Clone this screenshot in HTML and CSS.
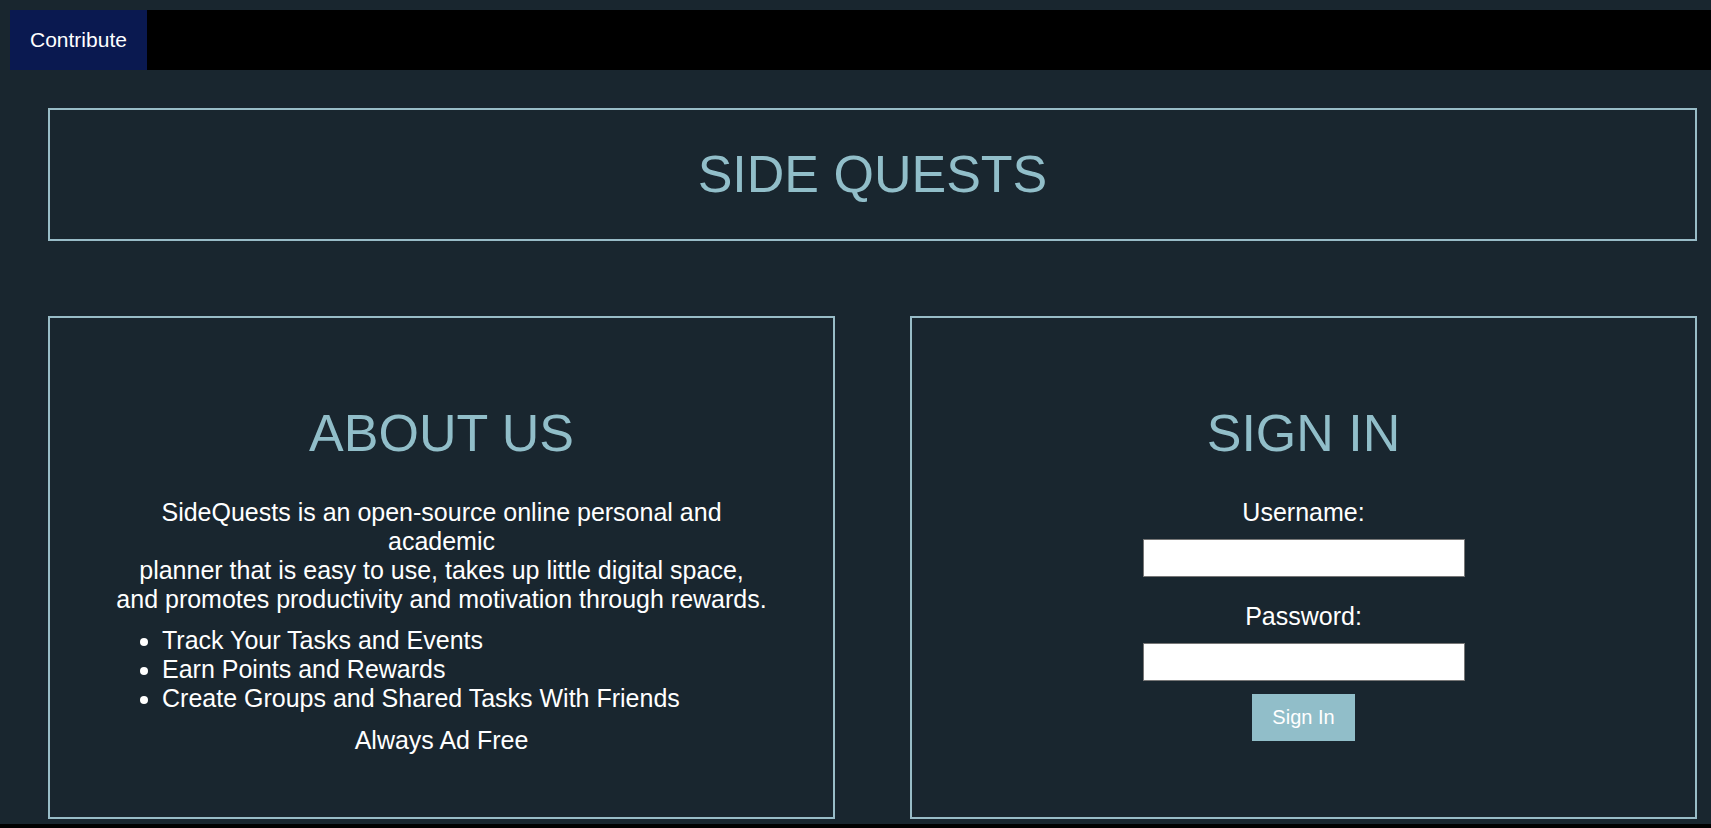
FILE: index.html
```html
<!DOCTYPE html>
<html lang="en">
<head>
<meta charset="utf-8">
<title>Side Quests</title>
<link rel="stylesheet" href="styles.css">
</head>
<body class="page">
<nav class="navbar">
  <a class="navbar-link" href="#contribute">Contribute</a>
</nav>
<main class="content">
  <header class="banner">
    <h1 class="title">SIDE QUESTS</h1>
  </header>
  <div class="panels">
    <section class="panel">
      <h2 class="title">ABOUT US</h2>
      <p class="text">SideQuests is an open-source online personal and academic<br>planner that is easy to use, takes up little digital space,<br>and promotes productivity and motivation through rewards.</p>
      <ul class="features">
        <li>Track Your Tasks and Events</li>
        <li>Earn Points and Rewards</li>
        <li>Create Groups and Shared Tasks With Friends</li>
      </ul>
      <p class="text">Always Ad Free</p>
    </section>
    <section class="panel">
      <h2 class="title">SIGN IN</h2>
      <form class="signin">
        <div class="field">
          <label for="username">Username:</label>
          <input class="field-input" type="text" id="username" name="username">
        </div>
        <div class="field">
          <label for="password">Password:</label>
          <input class="field-input" type="password" id="password" name="password">
        </div>
        <button class="button" type="submit">Sign In</button>
      </form>
    </section>
  </div>
</main>
<footer class="footer"></footer>
</body>
</html>
```

FILE: styles.css
```css
* {
  box-sizing: border-box;
}

.page {
  display: flex;
  flex-direction: column;
  min-height: 100vh;
  margin: 0;
  padding-top: 10px;
  background: #19262f;
  color: #fff;
  font: 25px/29px "Liberation Sans", Arial, sans-serif;
}

.navbar {
  display: flex;
  margin-left: 10px;
  background: #000;
}

.navbar-link {
  padding: 18px 20px;
  background: #0a1950;
  color: #fff;
  font-size: 21px;
  line-height: 24px;
  text-decoration: none;
}

.content {
  display: grid;
  gap: 75px;
  padding: 38px 14px 5px 48px;
}

.banner,
.panel {
  border: 2px solid #98bcc7;
  text-align: center;
}

.banner {
  padding: 34px 35px 35px;
}

.title {
  margin: 0;
  color: #91bec9;
  font-size: 52px;
  font-weight: 400;
  line-height: 60px;
}

.panels {
  display: grid;
  grid-template-columns: 1fr 1fr;
  gap: 75px;
}

.panel {
  padding: 85px 62px 62px;
}

.panel .title {
  margin-bottom: 35px;
}

.text {
  margin: 0;
}

.features {
  margin: 12px 0 13px;
  padding-left: 50px;
  text-align: left;
}

.signin {
  display: flex;
  flex-direction: column;
  align-items: center;
  gap: 13px;
}

.field {
  display: flex;
  flex-direction: column;
  align-items: center;
  gap: 12px;
}

.field + .field {
  margin-top: 12px;
}

.field-input {
  width: 322px;
  max-width: 100%;
  height: 38px;
  padding: 2px 4px;
  border: 1px solid #767676;
  background: #fff;
  font: inherit;
}

.button {
  padding: 12px 20px;
  border: 0;
  background: #91bec9;
  color: #fff;
  font: 20px/23px "Liberation Sans", Arial, sans-serif;
}

.footer {
  flex: 1;
  background: #000;
}
```
